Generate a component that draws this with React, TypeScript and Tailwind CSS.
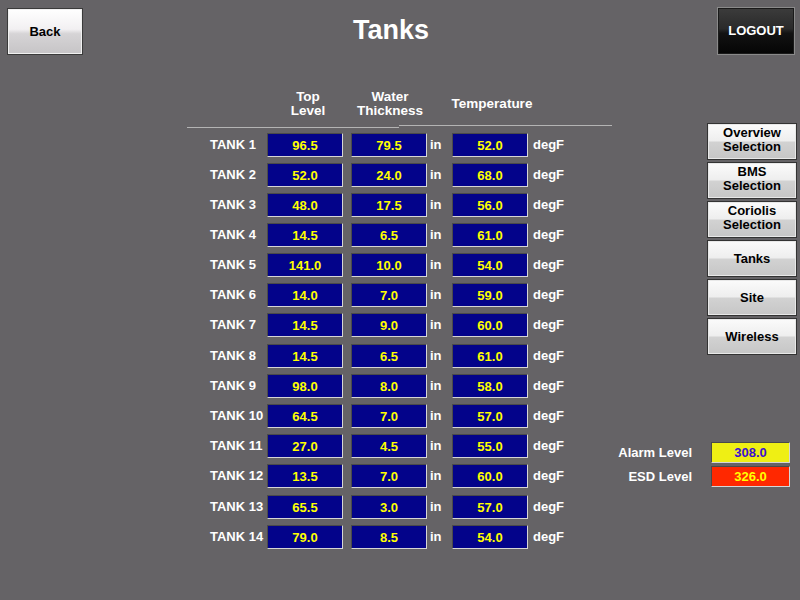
import React from "react";

const rows: [string, string, string, string, number][] = [
  ["TANK 1", "96.5", "79.5", "52.0", 0],
  ["TANK 2", "52.0", "24.0", "68.0", 0],
  ["TANK 3", "48.0", "17.5", "56.0", 0],
  ["TANK 4", "14.5", "6.5", "61.0", 0],
  ["TANK 5", "141.0", "10.0", "54.0", 0],
  ["TANK 6", "14.0", "7.0", "59.0", 0],
  ["TANK 7", "14.5", "9.0", "60.0", 0],
  ["TANK 8", "14.5", "6.5", "61.0", 1],
  ["TANK 9", "98.0", "8.0", "58.0", 0],
  ["TANK 10", "64.5", "7.0", "57.0", 0],
  ["TANK 11", "27.0", "4.5", "55.0", 0],
  ["TANK 12", "13.5", "7.0", "60.0", 0],
  ["TANK 13", "65.5", "3.0", "57.0", 1],
  ["TANK 14", "79.0", "8.5", "54.0", 0],
];

const font = { fontFamily: '"Liberation Sans", Arial, sans-serif' };

function Box({ v }: { v: string }) {
  return (
    <div className="w-[76px] h-[24px] shrink-0 bg-[#03038a] border border-t-[#4a4a4a] border-l-[#4a4a4a] border-b-[#d6d6d6] border-r-[#d6d6d6] flex items-center justify-center text-[#ffff00] text-[13px] font-bold leading-none">
      {v}
    </div>
  );
}

function SideBtn({ children, two }: { children: React.ReactNode; two?: boolean }) {
  return (
    <div className={`w-[90px] h-[37px] ${two ? "pb-[3px]" : ""} border border-[#333] bg-[linear-gradient(to_bottom,#fbfbfb_0%,#eeeeee_48%,#d2d2d2_52%,#c6c6c6_100%)] flex items-center justify-center text-center text-black text-[13px] font-bold leading-[14px] shadow-[inset_0_0_0_1px_#e8e8e8]`}>
      <div>{children}</div>
    </div>
  );
}

export default function App() {
  return (
    <div className="w-[800px] h-[600px] bg-[#656366] flex flex-col overflow-hidden text-white" style={font}>
      {/* header */}
      <div className="h-[63px] flex items-start pt-[7px]">
        <div className="ml-[7px] mt-[1px] w-[76px] h-[47px] border border-[#3a3a3a] bg-[linear-gradient(to_bottom,#ffffff_0%,#f2f0f2_45%,#d6d4d6_55%,#c6c4c6_100%)] flex items-center justify-center text-black text-[13px] font-bold shadow-[inset_0_0_0_1px_#f0f0f0]">
          Back
        </div>
        <div className="flex-1 pr-[18px] text-center text-[27px] font-bold leading-[46px]">Tanks</div>
        <div className="mr-[5px] w-[78px] h-[48px] border border-[#8a8a8a] bg-[linear-gradient(to_bottom,#3c3c3c_0%,#2a2a2a_45%,#121212_55%,#050505_100%)] flex items-center justify-center text-white text-[13px] font-bold shadow-[inset_0_0_0_1px_#1a1a1a]">
          LOGOUT
        </div>
      </div>
      {/* body */}
      <div className="flex flex-1">
        <div className="w-[600px] shrink-0 pl-[187px] pt-[27px]">
          {/* column headers */}
          <div className="flex h-[34px] text-[13.5px] font-bold leading-[14px]">
            <div className="w-[80px] shrink-0" />
            <div className="w-[76px] shrink-0 text-center ml-[3px]">Top<br />Level</div>
            <div className="w-[94px] shrink-0 text-center ml-[-3px]">Water<br />Thickness</div>
            <div className="w-[102px] shrink-0 text-center ml-[4px] pt-[7px]">Temperature</div>
          </div>
          {/* divider lines */}
          <div className="flex items-start h-[9px]">
            <div className="w-[212px] shrink-0 h-px bg-[#b4b4b4] mt-[3px]" />
            <div className="w-[213px] shrink-0 h-px bg-[#b4b4b4] mt-[1px]" />
          </div>
          {/* rows */}
          <div className="flex flex-col">
            {rows.map(([name, a, b, c, extra]) => (
              <div key={name} className={`flex items-start h-[30px] ${extra ? "mt-[1px]" : ""}`}>
                <div className="w-[57px] shrink-0 ml-[23px] h-[24px] flex items-center text-[13px] font-bold">{name}</div>
                <Box v={a} />
                <div className="w-[8px] shrink-0" />
                <Box v={b} />
                <div className="w-[25px] shrink-0 h-[24px] flex items-center pl-[3px] text-[13px] font-bold">in</div>
                <Box v={c} />
                <div className="h-[24px] flex items-center pl-[5px] text-[13px] font-bold">degF</div>
              </div>
            ))}
          </div>
        </div>
        {/* right side */}
        <div className="w-[200px] flex flex-col">
          <div className="flex flex-col items-end pr-[3px] pt-[60px] gap-[2px]">
            <SideBtn two>Overview<br />Selection</SideBtn>
            <SideBtn two>BMS<br />Selection</SideBtn>
            <SideBtn two>Coriolis<br />Selection</SideBtn>
            <SideBtn>Tanks</SideBtn>
            <SideBtn>Site</SideBtn>
            <SideBtn>Wireless</SideBtn>
          </div>
          <div className="flex flex-col mt-[87px] gap-[3px] pr-[10px]">
            <div className="flex items-center justify-end">
              <div className="text-[13px] font-bold mr-[19px]">Alarm Level</div>
              <div className="w-[79px] h-[21px] bg-[#efef14] border border-t-[#4a4a4a] border-l-[#4a4a4a] border-b-[#d6d6d6] border-r-[#d6d6d6] flex items-center justify-center text-[#3a10d0] text-[13px] font-bold">308.0</div>
            </div>
            <div className="flex items-center justify-end">
              <div className="text-[13px] font-bold mr-[19px]">ESD Level</div>
              <div className="w-[79px] h-[21px] bg-[#ff2800] border border-t-[#4a4a4a] border-l-[#4a4a4a] border-b-[#d6d6d6] border-r-[#d6d6d6] flex items-center justify-center text-[#ffff00] text-[13px] font-bold">326.0</div>
            </div>
          </div>
        </div>
      </div>
    </div>
  );
}
